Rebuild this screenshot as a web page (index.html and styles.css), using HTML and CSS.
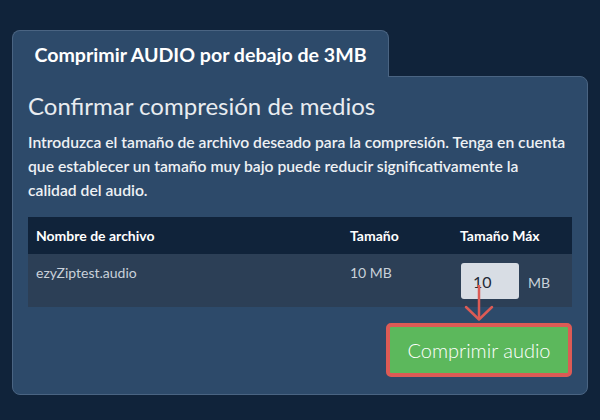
FILE: index.html
```html
<!DOCTYPE html>
<html lang="es">
<head>
<meta charset="utf-8">
<title>Comprimir AUDIO</title>
<link rel="stylesheet" href="styles.css">
</head>
<body>
<div class="wrap">
  <div class="tab">Comprimir AUDIO por debajo de 3MB</div>
  <div class="panel">
    <h2 class="title">Confirmar compresión de medios</h2>
    <p class="desc">Introduzca el tamaño de archivo deseado para la compresión. Tenga en cuenta que establecer un tamaño muy bajo puede reducir significativamente la<br>calidad del audio.</p>
    <table class="files">
      <thead>
        <tr>
          <th class="c-name">Nombre de archivo</th>
          <th class="c-size">Tamaño</th>
          <th class="c-max">Tamaño Máx</th>
        </tr>
      </thead>
      <tbody>
        <tr>
          <td>ezyZiptest.audio</td>
          <td>10 MB</td>
          <td><div class="max"><input class="num" type="text" value="10"><span>MB</span></div></td>
        </tr>
      </tbody>
    </table>
    <div class="actions">
      <button class="go" type="button">Comprimir audio</button>
    </div>
  </div>
</div>
<svg class="arrow" width="40" height="40" viewBox="0 0 40 40" aria-hidden="true">
  <line x1="19" y1="0" x2="19" y2="34" stroke="#dc5b55" stroke-width="2.5"/>
  <polyline points="6,22 19,34.5 32,22" fill="none" stroke="#dc5b55" stroke-width="2.5" stroke-linecap="round" stroke-linejoin="round"/>
</svg>
</body>
</html>
```

FILE: styles.css
```css
html, body {
  margin: 0;
  padding: 0;
  background: #10233a;
  font-family: Lato, "Noto Sans", sans-serif;
  width: 600px;
  height: 420px;
  overflow: hidden;
}

.wrap {
  padding: 30px 0 0 12px;
  width: 576px;
}

.tab {
  position: relative;
  z-index: 1;
  width: 377px;
  box-sizing: border-box;
  margin-bottom: -1px;
  background: #2d4a6a;
  border: 1px solid #4a6482;
  border-bottom: none;
  border-radius: 8px 8px 0 0;
  padding: 12px 0 11px 0;
  text-align: center;
  color: #ffffff;
  font-weight: 700;
  font-size: 19.6px;
  line-height: 23px;
}

.panel {
  background: #2d4a6a;
  border: 1px solid #4a6482;
  border-radius: 0 8px 8px 8px;
  padding: 14px 15px 17px 15px;
}

.title {
  margin: 0;
  font-weight: 400;
  font-size: 24px;
  line-height: 30px;
  color: #e8ecf0;
}

.desc {
  margin: 9px 0 15px 0;
  font-size: 15.7px;
  font-weight: 600;
  line-height: 24px;
  color: #eef1f4;
}

.files {
  width: 544px;
  border-collapse: collapse;
  table-layout: fixed;
}

.files th {
  background: #10233a;
  color: #ffffff;
  font-weight: 700;
  font-size: 14px;
  line-height: 17px;
  height: 37px;
  padding: 0 8px;
  text-align: left;
  box-sizing: border-box;
}

.c-name { width: 314px; }
.c-size { width: 110px; }
.c-max { width: 120px; }

.files td {
  background: #2c3f56;
  color: #c9d1da;
  font-size: 14px;
  line-height: 20px;
  padding: 9px 8px 8px 8px;
  vertical-align: top;
}

.max {
  display: flex;
  align-items: baseline;
  gap: 9px;
}

.num {
  width: 58px;
  height: 36px;
  box-sizing: border-box;
  margin: 0 0 0 1px;
  padding: 0 12px;
  border: none;
  border-radius: 3px;
  background: #d8dde4;
  color: #1f2a36;
  font-family: Lato, "Noto Sans", sans-serif;
  font-size: 16px;
}

.actions {
  display: flex;
  justify-content: flex-end;
  margin-top: 16px;
}

.go {
  width: 186px;
  height: 54px;
  box-sizing: border-box;
  border: 4px solid #dc5b55;
  border-radius: 5px;
  background: #5cb85c;
  color: #ffffff;
  font-family: Lato, "Noto Sans", sans-serif;
  font-weight: 300;
  font-size: 20px;
  padding: 0;
}

.arrow {
  position: absolute;
  left: 460px;
  top: 285px;
}
```
